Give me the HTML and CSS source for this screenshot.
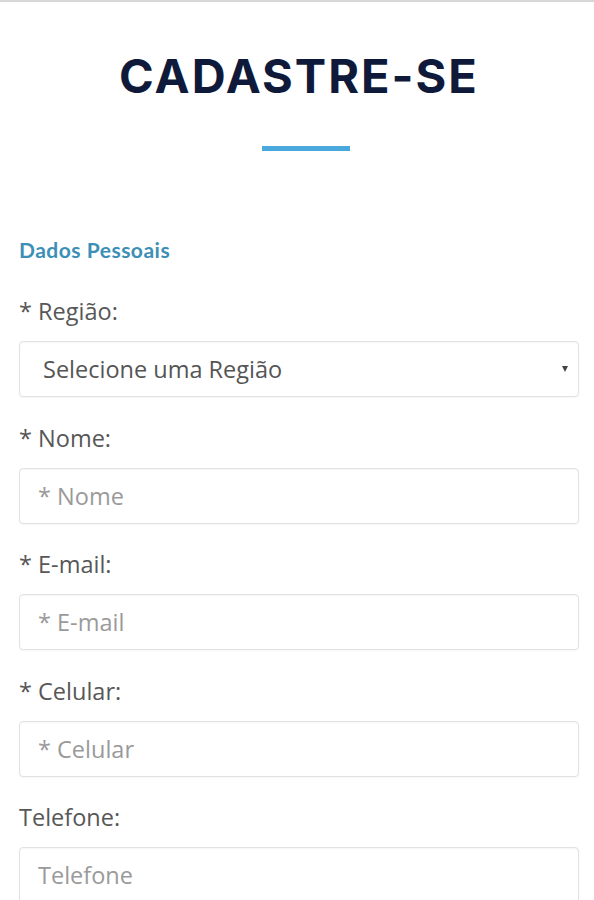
FILE: index.html
```html
<!DOCTYPE html>
<html lang="pt-BR">
<head>
<meta charset="utf-8">
<title>Cadastre-se</title>
<link rel="stylesheet" href="styles.css">
</head>
<body>
<div class="page">
  <header class="hero">
    <h1 class="title">CADASTRE-SE</h1>
    <div class="title-bar"></div>
  </header>
  <form class="form">
    <h2 class="section">Dados Pessoais</h2>
    <div class="field">
      <label class="label" for="regiao">* Região:</label>
      <div class="select-wrap">
        <select id="regiao" class="control select">
          <option>Selecione uma Região</option>
        </select>
        <span class="caret"></span>
      </div>
    </div>
    <div class="field">
      <label class="label" for="nome">* Nome:</label>
      <input id="nome" class="control" type="text" placeholder="* Nome">
    </div>
    <div class="field">
      <label class="label" for="email">* E-mail:</label>
      <input id="email" class="control" type="text" placeholder="* E-mail">
    </div>
    <div class="field">
      <label class="label" for="celular">* Celular:</label>
      <input id="celular" class="control" type="text" placeholder="* Celular">
    </div>
    <div class="field">
      <label class="label" for="telefone">Telefone:</label>
      <input id="telefone" class="control" type="text" placeholder="Telefone">
    </div>
  </form>
</div>
</body>
</html>
```
FILE: styles.css
```css
* { box-sizing: border-box; }
html, body { margin: 0; padding: 0; background: #fff; }
body { font-family: "Open Sans", "Liberation Sans", sans-serif; overflow: hidden; }
.page {
  border-top: 2px solid #d8d8d8;
  padding: 0 15px 0 19px;
  height: 900px;
}
.hero {
  display: flex;
  flex-direction: column;
  align-items: center;
  padding-top: 50px;
}
.title {
  margin: 0;
  font-family: Inter, Lato, "Liberation Sans", sans-serif;
  font-weight: 700;
  font-size: 47px;
  line-height: 47px;
  letter-spacing: 2px;
  color: #0f1a3b;
}
.title-bar {
  margin-top: 47px;
  margin-left: 14px;
  width: 88px;
  height: 5px;
  background: #4aa9dc;
}
.form { display: flex; flex-direction: column; }
.section {
  margin: 87px 0 33px;
  font-family: Lato, "Liberation Sans", sans-serif;
  font-weight: 700;
  font-size: 21px;
  line-height: 24px;
  letter-spacing: 0.5px;
  color: #3c8fb6;
}
.field { display: flex; flex-direction: column; margin-bottom: 24.5px; }
.label {
  font-size: 23.5px;
  line-height: 32px;
  color: #575757;
  margin-bottom: 14px;
}
.control {
  width: 100%;
  height: 56px;
  border: 1px solid #e2e2e2;
  border-radius: 4px;
  background: #fff;
  box-shadow: inset 0 1px 2px rgba(0,0,0,0.04), 0 1px 2px rgba(0,0,0,0.04);
  font-family: "Open Sans", "Liberation Sans", sans-serif;
  font-size: 23.5px;
  color: #555;
  padding: 0 18px;
  outline: none;
}
.control::placeholder { color: #9a9a9a; }
.select-wrap { position: relative; }
.select {
  appearance: none;
  -webkit-appearance: none;
  padding-left: 23px;
  color: #555;
}
.caret {
  position: absolute;
  right: 11px;
  top: 25px;
  width: 0;
  height: 0;
  border-left: 3.5px solid transparent;
  border-right: 3.5px solid transparent;
  border-top: 6px solid #444;
  pointer-events: none;
}
```
